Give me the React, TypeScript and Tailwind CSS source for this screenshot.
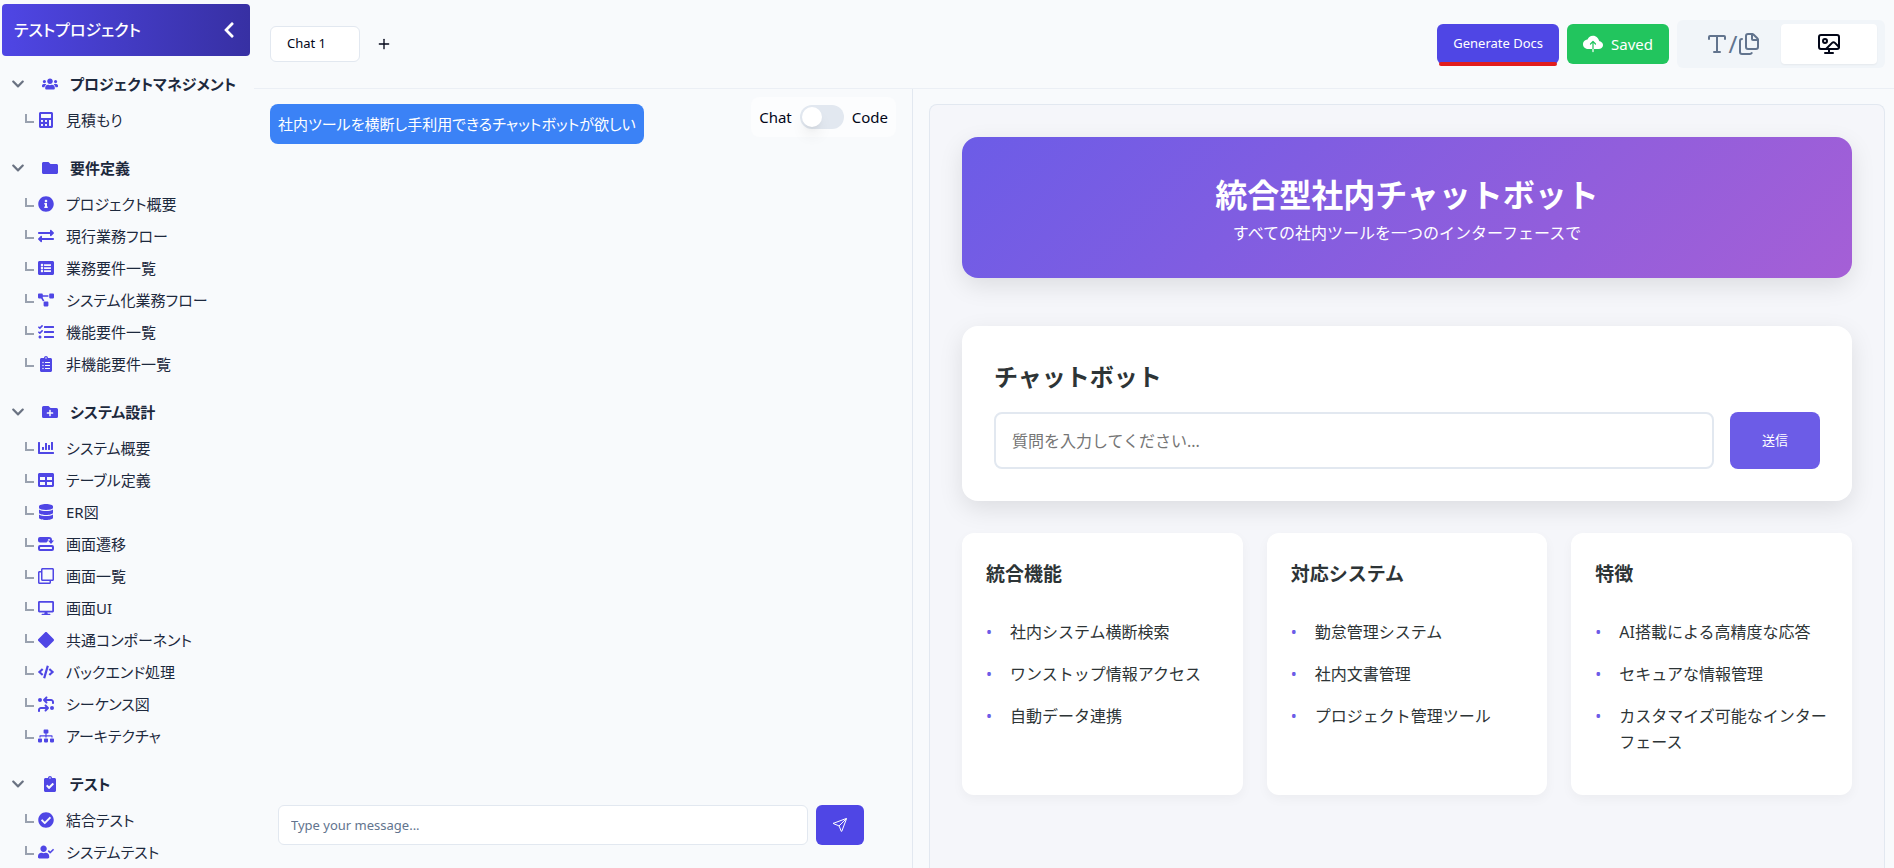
import { useState } from "react";
import type { IconType } from "react-icons";
import {
    FaCalculator,
    FaChartBar,
    FaCheckCircle,
    FaChevronDown,
    FaChevronLeft,
    FaClipboardCheck,
    FaClipboardList,
    FaCode,
    FaDatabase,
    FaDesktop,
    FaExchangeAlt,
    FaFolder,
    FaFolderPlus,
    FaInfoCircle,
    FaListAlt,
    FaProjectDiagram,
    FaRegClone,
    FaSitemap,
    FaTable,
    FaTasks,
    FaUserCheck,
    FaUsers,
} from "react-icons/fa";
import { FaArrowsTurnToDots } from "react-icons/fa6";
import { BsDiamondFill } from "react-icons/bs";
import { IoCloudUpload, IoPaperPlaneOutline } from "react-icons/io5";
import { Files, Plus, Type, Wallpaper } from "lucide-react";

const ScreenFlowIcon = ({ size = 16 }: { size?: number }) => (
    <svg width={size} height={size} viewBox="0 0 16 16" fill="currentColor">
        <path d="M2 1h9a3 3 0 0 1 3 3v.6h2L13 8l-3-3.400h2V4a1 1 0 0 0-1-1h-.5L9.500 5.500 8.500 6.600H2a2 2 0 0 1-2-2V3a2 2 0 0 1 2-2z" />
        <path
            fillRule="evenodd"
            d="M2 9h12a2 2 0 0 1 2 2v2a2 2 0 0 1-2 2H2a2 2 0 0 1-2-2v-2a2 2 0 0 1 2-2zm.5 2a.5.5 0 0 0-.5.5v1a.5.5 0 0 0 .5.5h11a.5.5 0 0 0 .5-.5v-1a.5.5 0 0 0-.5-.5z"
        />
    </svg>
);

type Item = { label: string; icon: IconType | typeof ScreenFlowIcon };
type Group = Item & { items: Item[] };

const groups: Group[] = [
    {
        label: "プロジェクトマネジメント",
        icon: FaUsers,
        items: [{ label: "見積もり", icon: FaCalculator }],
    },
    {
        label: "要件定義",
        icon: FaFolder,
        items: [
            { label: "プロジェクト概要", icon: FaInfoCircle },
            { label: "現行業務フロー", icon: FaExchangeAlt },
            { label: "業務要件一覧", icon: FaListAlt },
            { label: "システム化業務フロー", icon: FaProjectDiagram },
            { label: "機能要件一覧", icon: FaTasks },
            { label: "非機能要件一覧", icon: FaClipboardList },
        ],
    },
    {
        label: "システム設計",
        icon: FaFolderPlus,
        items: [
            { label: "システム概要", icon: FaChartBar },
            { label: "テーブル定義", icon: FaTable },
            { label: "ER図", icon: FaDatabase },
            { label: "画面遷移", icon: ScreenFlowIcon },
            { label: "画面一覧", icon: FaRegClone },
            { label: "画面UI", icon: FaDesktop },
            { label: "共通コンポーネント", icon: BsDiamondFill },
            { label: "バックエンド処理", icon: FaCode },
            { label: "シーケンス図", icon: FaArrowsTurnToDots },
            { label: "アーキテクチャ", icon: FaSitemap },
        ],
    },
    {
        label: "テスト",
        icon: FaClipboardCheck,
        items: [
            { label: "結合テスト", icon: FaCheckCircle },
            { label: "システムテスト", icon: FaUserCheck },
        ],
    },
];

const features = [
    { title: "統合機能", points: ["社内システム横断検索", "ワンストップ情報アクセス", "自動データ連携"] },
    { title: "対応システム", points: ["勤怠管理システム", "社内文書管理", "プロジェクト管理ツール"] },
    { title: "特徴", points: ["AI搭載による高精度な応答", "セキュアな情報管理", "カスタマイズ可能なインターフェース"] },
];

function Sidebar() {
    const [closed, setClosed] = useState<string[]>([]);

    const toggle = (label: string) => {
        setClosed(closed.includes(label) ? closed.filter((l) => l !== label) : [...closed, label]);
    };

    return (
        <aside className="w-[254px] shrink-0 overflow-hidden whitespace-nowrap pt-1 text-[15px] text-slate-800 [font-feature-settings:'palt']">
            <div className="ml-0.5 mr-1 flex h-[52px] items-center justify-between rounded bg-gradient-to-r from-[#4f46e5] to-[#3730a3] pl-3 pr-2 text-white">
                <span className="text-base font-medium">テストプロジェクト</span>
                <button aria-label="サイドバーを閉じる" className="p-1">
                    <FaChevronLeft size={18} />
                </button>
            </div>
            <nav className="mt-3 flex flex-col gap-4">
                {groups.map((group) => (
                    <div key={group.label}>
                        <button
                            onClick={() => toggle(group.label)}
                            className="mb-1 flex h-8 w-full items-center pl-[11px] text-left font-semibold"
                        >
                            <FaChevronDown size={14} className="text-gray-500" />
                            <group.icon size={16} className="ml-[17px] mr-3 text-[#4f46e5]" />
                            {group.label}
                        </button>
                        {!closed.includes(group.label) &&
                            group.items.map((item) => (
                                <a key={item.label} href="#" className="flex h-8 items-center pl-[25px]">
                                    <span className="mb-1 mr-1 h-[9px] w-[9px] border-b-2 border-l-2 border-gray-400" />
                                    <span className="mr-3 text-[#4f46e5]">
                                        <item.icon size={16} />
                                    </span>
                                    {item.label}
                                </a>
                            ))}
                    </div>
                ))}
            </nav>
        </aside>
    );
}

function Header() {
    return (
        <header className="flex h-[89px] shrink-0 items-center justify-between border-b border-slate-200/60 pl-4 pr-[9px]">
            <div className="flex items-center gap-4">
                <button className="h-9 w-[90px] rounded-md border border-slate-200 bg-white pl-4 text-left text-[13px] text-slate-950">
                    Chat 1
                </button>
                <button aria-label="Add chat" className="text-slate-950">
                    <Plus size={16} />
                </button>
            </div>
            <div className="flex items-center gap-2">
                <div className="relative">
                    <button className="h-10 rounded-md bg-[#4f46e5] px-4 text-[13px] text-white">Generate Docs</button>
                    <span className="absolute -bottom-0.5 left-0.5 right-0.5 h-1 rounded-xs bg-[#e11d1d]" />
                </div>
                <button className="flex h-10 items-center gap-2 rounded-md bg-[#22c55e] px-4 text-[15px] text-white">
                    <IoCloudUpload size={20} />
                    Saved
                </button>
                <div className="flex rounded-md bg-slate-100 px-2 py-1 text-slate-500">
                    <button aria-label="Text" className="flex h-10 w-24 items-center justify-center">
                        <Type size={24} />
                        <span className="text-2xl">/</span>
                        <Files size={24} />
                    </button>
                    <button
                        aria-label="Preview"
                        className="flex h-10 w-24 items-center justify-center rounded bg-white text-slate-950 shadow-xs"
                    >
                        <Wallpaper size={24} />
                    </button>
                </div>
            </div>
        </header>
    );
}

function ChatPanel() {
    const [codeMode, setCodeMode] = useState(false);

    return (
        <section className="relative flex w-2/5 shrink-0 flex-col justify-between pt-[15px] pb-[23px]">
            <div className="pl-4">
                <p className="inline-block h-10 rounded-lg bg-[#3b82f6] px-2 text-[15px] leading-10 text-white [font-feature-settings:'palt']">
                    社内ツールを横断し手利用できるチャットボットが欲しい
                </p>
            </div>
            <label className="absolute right-3.5 top-2 flex h-10 items-center gap-2 rounded-lg bg-white/50 px-2 text-[15px] text-slate-950">
                Chat
                <input
                    type="checkbox"
                    checked={codeMode}
                    onChange={(e) => setCodeMode(e.target.checked)}
                    className="peer sr-only"
                />
                <span className="flex h-6 w-11 items-center rounded-full bg-slate-200 px-0.5 peer-checked:justify-end">
                    <span className="h-5 w-5 rounded-full bg-white shadow-lg" />
                </span>
                Code
            </label>
            <form className="flex gap-2 pl-6 pr-[46px]" onSubmit={(e) => e.preventDefault()}>
                <input
                    aria-label="Message"
                    placeholder="Type your message..."
                    className="h-10 min-w-0 flex-1 rounded-md border border-slate-200 bg-white px-3 text-[13px] placeholder:text-slate-500"
                />
                <button
                    aria-label="Send"
                    className="flex h-10 w-12 items-center justify-center rounded-md bg-[#4f46e5] text-white"
                >
                    <IoPaperPlaneOutline size={16} />
                </button>
            </form>
        </section>
    );
}

function Preview() {
    return (
        <section className="ml-0.5 flex min-w-0 flex-1 border-l border-slate-200 pl-4 pr-[9px] pt-[15px]">
            <div className="flex-1 rounded-t-lg border border-b-0 border-slate-200 bg-[#f5f6fa] p-8 text-[#2d3436]">
                <div className="mb-12 rounded-2xl bg-[linear-gradient(135deg,#6c5ce7,#a55fd6)] p-8 text-center text-white shadow-[0_8px_24px_rgba(0,0,0,0.1)]">
                    <h1 className="text-[32px] font-bold leading-[51px]">統合型社内チャットボット</h1>
                    <p className="leading-[26px]">すべての社内ツールを一つのインターフェースで</p>
                </div>
                <div className="mb-8 rounded-2xl bg-white p-8 shadow-[0_8px_24px_rgba(0,0,0,0.1)]">
                    <h2 className="mb-4 text-2xl font-bold leading-[38px]">チャットボット</h2>
                    <form className="flex gap-4" onSubmit={(e) => e.preventDefault()}>
                        <input
                            aria-label="質問"
                            placeholder="質問を入力してください..."
                            className="h-[57px] min-w-0 flex-1 rounded-lg border-2 border-slate-200 px-4 placeholder:text-[#757575]"
                        />
                        <button className="rounded-lg bg-[#6c5ce7] px-8 text-[13px] text-white">送信</button>
                    </form>
                </div>
                <div className="grid grid-cols-3 gap-6">
                    {features.map((feature) => (
                        <div
                            key={feature.title}
                            className="rounded-xl bg-white px-6 pb-8 pt-6 shadow-[0_4px_12px_rgba(0,0,0,0.04)]"
                        >
                            <h3 className="mb-5 text-[19px] font-bold leading-[34px]">{feature.title}</h3>
                            <ul>
                                {feature.points.map((point) => (
                                    <li key={point} className="flex py-2 leading-[26px]">
                                        <span className="w-6 shrink-0 text-[#6c5ce7]">•</span>
                                        <span>{point}</span>
                                    </li>
                                ))}
                            </ul>
                        </div>
                    ))}
                </div>
            </div>
        </section>
    );
}

export default function App() {
    return (
        <div className="flex h-screen overflow-hidden bg-slate-50 font-['Noto_Sans','Noto_Sans_CJK_JP',sans-serif]">
            <Sidebar />
            <main className="flex min-w-0 flex-1 flex-col">
                <Header />
                <div className="flex min-h-0 flex-1">
                    <ChatPanel />
                    <Preview />
                </div>
            </main>
        </div>
    );
}
